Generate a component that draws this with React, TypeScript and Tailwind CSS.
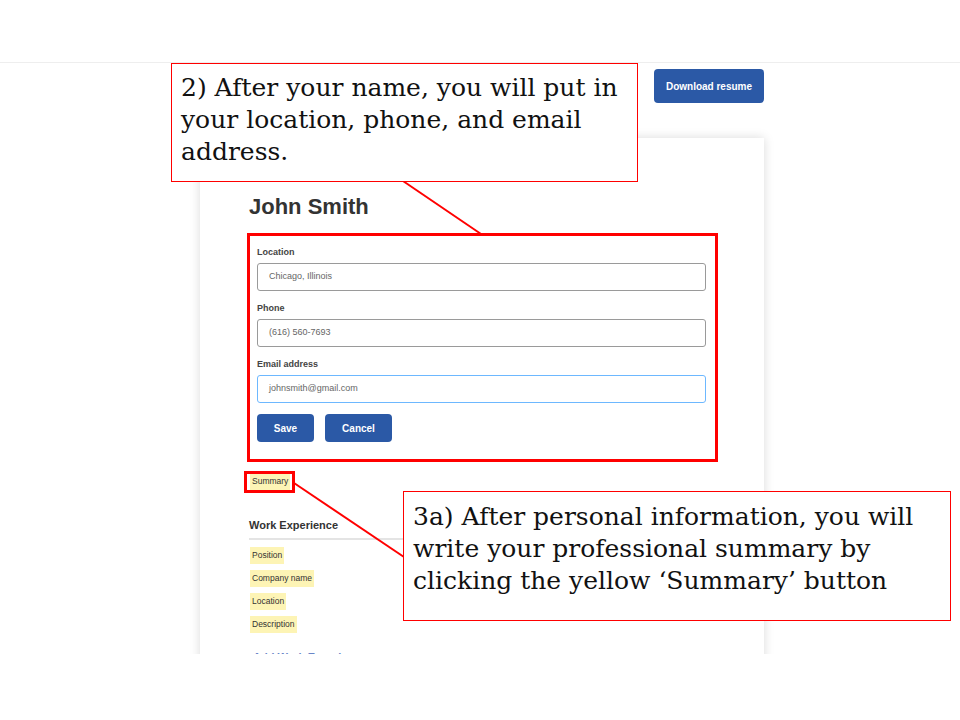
import React from "react";

const SANS = "font-['Liberation_Sans',Arial,sans-serif]";
const SERIF = "font-['DejaVu_Serif','Liberation_Serif',serif]";

function Field({ label, value, focused }: { label: string; value: string; focused?: boolean }) {
  return (
    <div className="flex flex-col">
      <label className="text-[9px] leading-[12px] font-bold text-[#444]">{label}</label>
      <div
        className={`mt-[5px] h-[28px] w-[449px] rounded-[3px] flex items-center pl-[11px] text-[9px] text-[#666] ${
          focused ? "border-[1.5px] border-[#6db8ff]" : "border-[1.5px] border-[#9a9a9a]"
        }`}
      >
        {value}
      </div>
    </div>
  );
}

function Tag({ children }: { children: React.ReactNode }) {
  return (
    <span className="self-start bg-[#fdf4b5] px-[2px] h-[17px] flex items-center text-[8.5px] text-[#333]">
      {children}
    </span>
  );
}

export default function App() {
  return (
    <div className={`relative w-[960px] h-[720px] bg-white overflow-hidden ${SANS}`}>
      {/* top bar */}
      <div className="h-[63px] border-b border-[#eeeeee]" />

      {/* captured page */}
      <div className="h-[591px] overflow-hidden">
        <div className="ml-[200px] w-[564px] flex flex-col">
          <div className="flex justify-end pt-[6px]">
            <button className="h-[34px] w-[110px] rounded-[4px] bg-[#2b59a6] text-white text-[10px] font-bold">
              Download resume
            </button>
          </div>

          <div className="mt-[35px] bg-white shadow-[0_0_10px_rgba(0,0,0,0.15)] pl-[49px] pt-[55px] pb-[40px] flex flex-col">
            <h1 className="text-[22px] leading-[28px] font-bold text-[#333]">John Smith</h1>

            <div className="mt-[25px] ml-[8px] flex flex-col gap-[11px]">
              <Field label="Location" value="Chicago, Illinois" />
              <Field label="Phone" value="(616) 560-7693" />
              <Field label="Email address" value="johnsmith@gmail.com" focused />
              <div className="flex gap-[11px]">
                <button className="h-[28px] w-[57px] rounded-[4px] bg-[#2b59a6] text-white text-[10px] font-bold">
                  Save
                </button>
                <button className="h-[28px] w-[67px] rounded-[4px] bg-[#2b59a6] text-white text-[10px] font-bold">
                  Cancel
                </button>
              </div>
            </div>

            <div className="mt-[31px] ml-[1px] flex flex-col">
              <Tag>Summary</Tag>
            </div>

            <div className="mt-[27px] w-[466px] border-b-2 border-[#e4e4e4] pb-[4px] text-[11px] font-bold text-[#333]">
              Work Experience
            </div>

            <div className="mt-[7px] ml-[1px] flex flex-col gap-[6px]">
              <Tag>Position</Tag>
              <Tag>Company name</Tag>
              <Tag>Location</Tag>
              <Tag>Description</Tag>
            </div>

            <div className="mt-[18px] ml-[4px] text-[11px] leading-[13px] font-bold text-[#6a86c8]">
              Add Work Experience
            </div>
          </div>
        </div>
      </div>

      {/* annotation connectors */}
      <svg className="absolute inset-0 pointer-events-none" width="960" height="720">
        <line x1="403" y1="181" x2="481" y2="234" stroke="#ff0000" strokeWidth="2" />
        <line x1="294" y1="483" x2="404" y2="557" stroke="#ff0000" strokeWidth="2" />
      </svg>

      {/* highlight boxes */}
      <div className="absolute left-[247px] top-[233px] w-[471px] h-[229px] border-[3px] border-[#ff0000]" />
      <div className="absolute left-[244px] top-[471px] w-[51px] h-[22px] border-[3px] border-[#ff0000]" />

      {/* callout 1 */}
      <div
        className={`absolute left-[171px] top-[63px] w-[467px] h-[119px] bg-white shadow-[inset_0_0_0_1px_#ff0000] pl-[10px] pt-[9px] text-[25px] leading-[32px] text-[#111] ${SERIF}`}
      >
        2) After your name, you will put in your location, phone, and email address.
      </div>

      {/* callout 2 */}
      <div
        className={`absolute left-[403px] top-[491px] w-[548px] h-[130px] bg-white shadow-[inset_0_0_0_1px_#ff0000] pl-[10px] pt-[10px] text-[25px] leading-[32px] text-[#111] ${SERIF}`}
      >
        3a) After personal information, you will write your professional summary by clicking the yellow ‘Summary’ button
      </div>
    </div>
  );
}
